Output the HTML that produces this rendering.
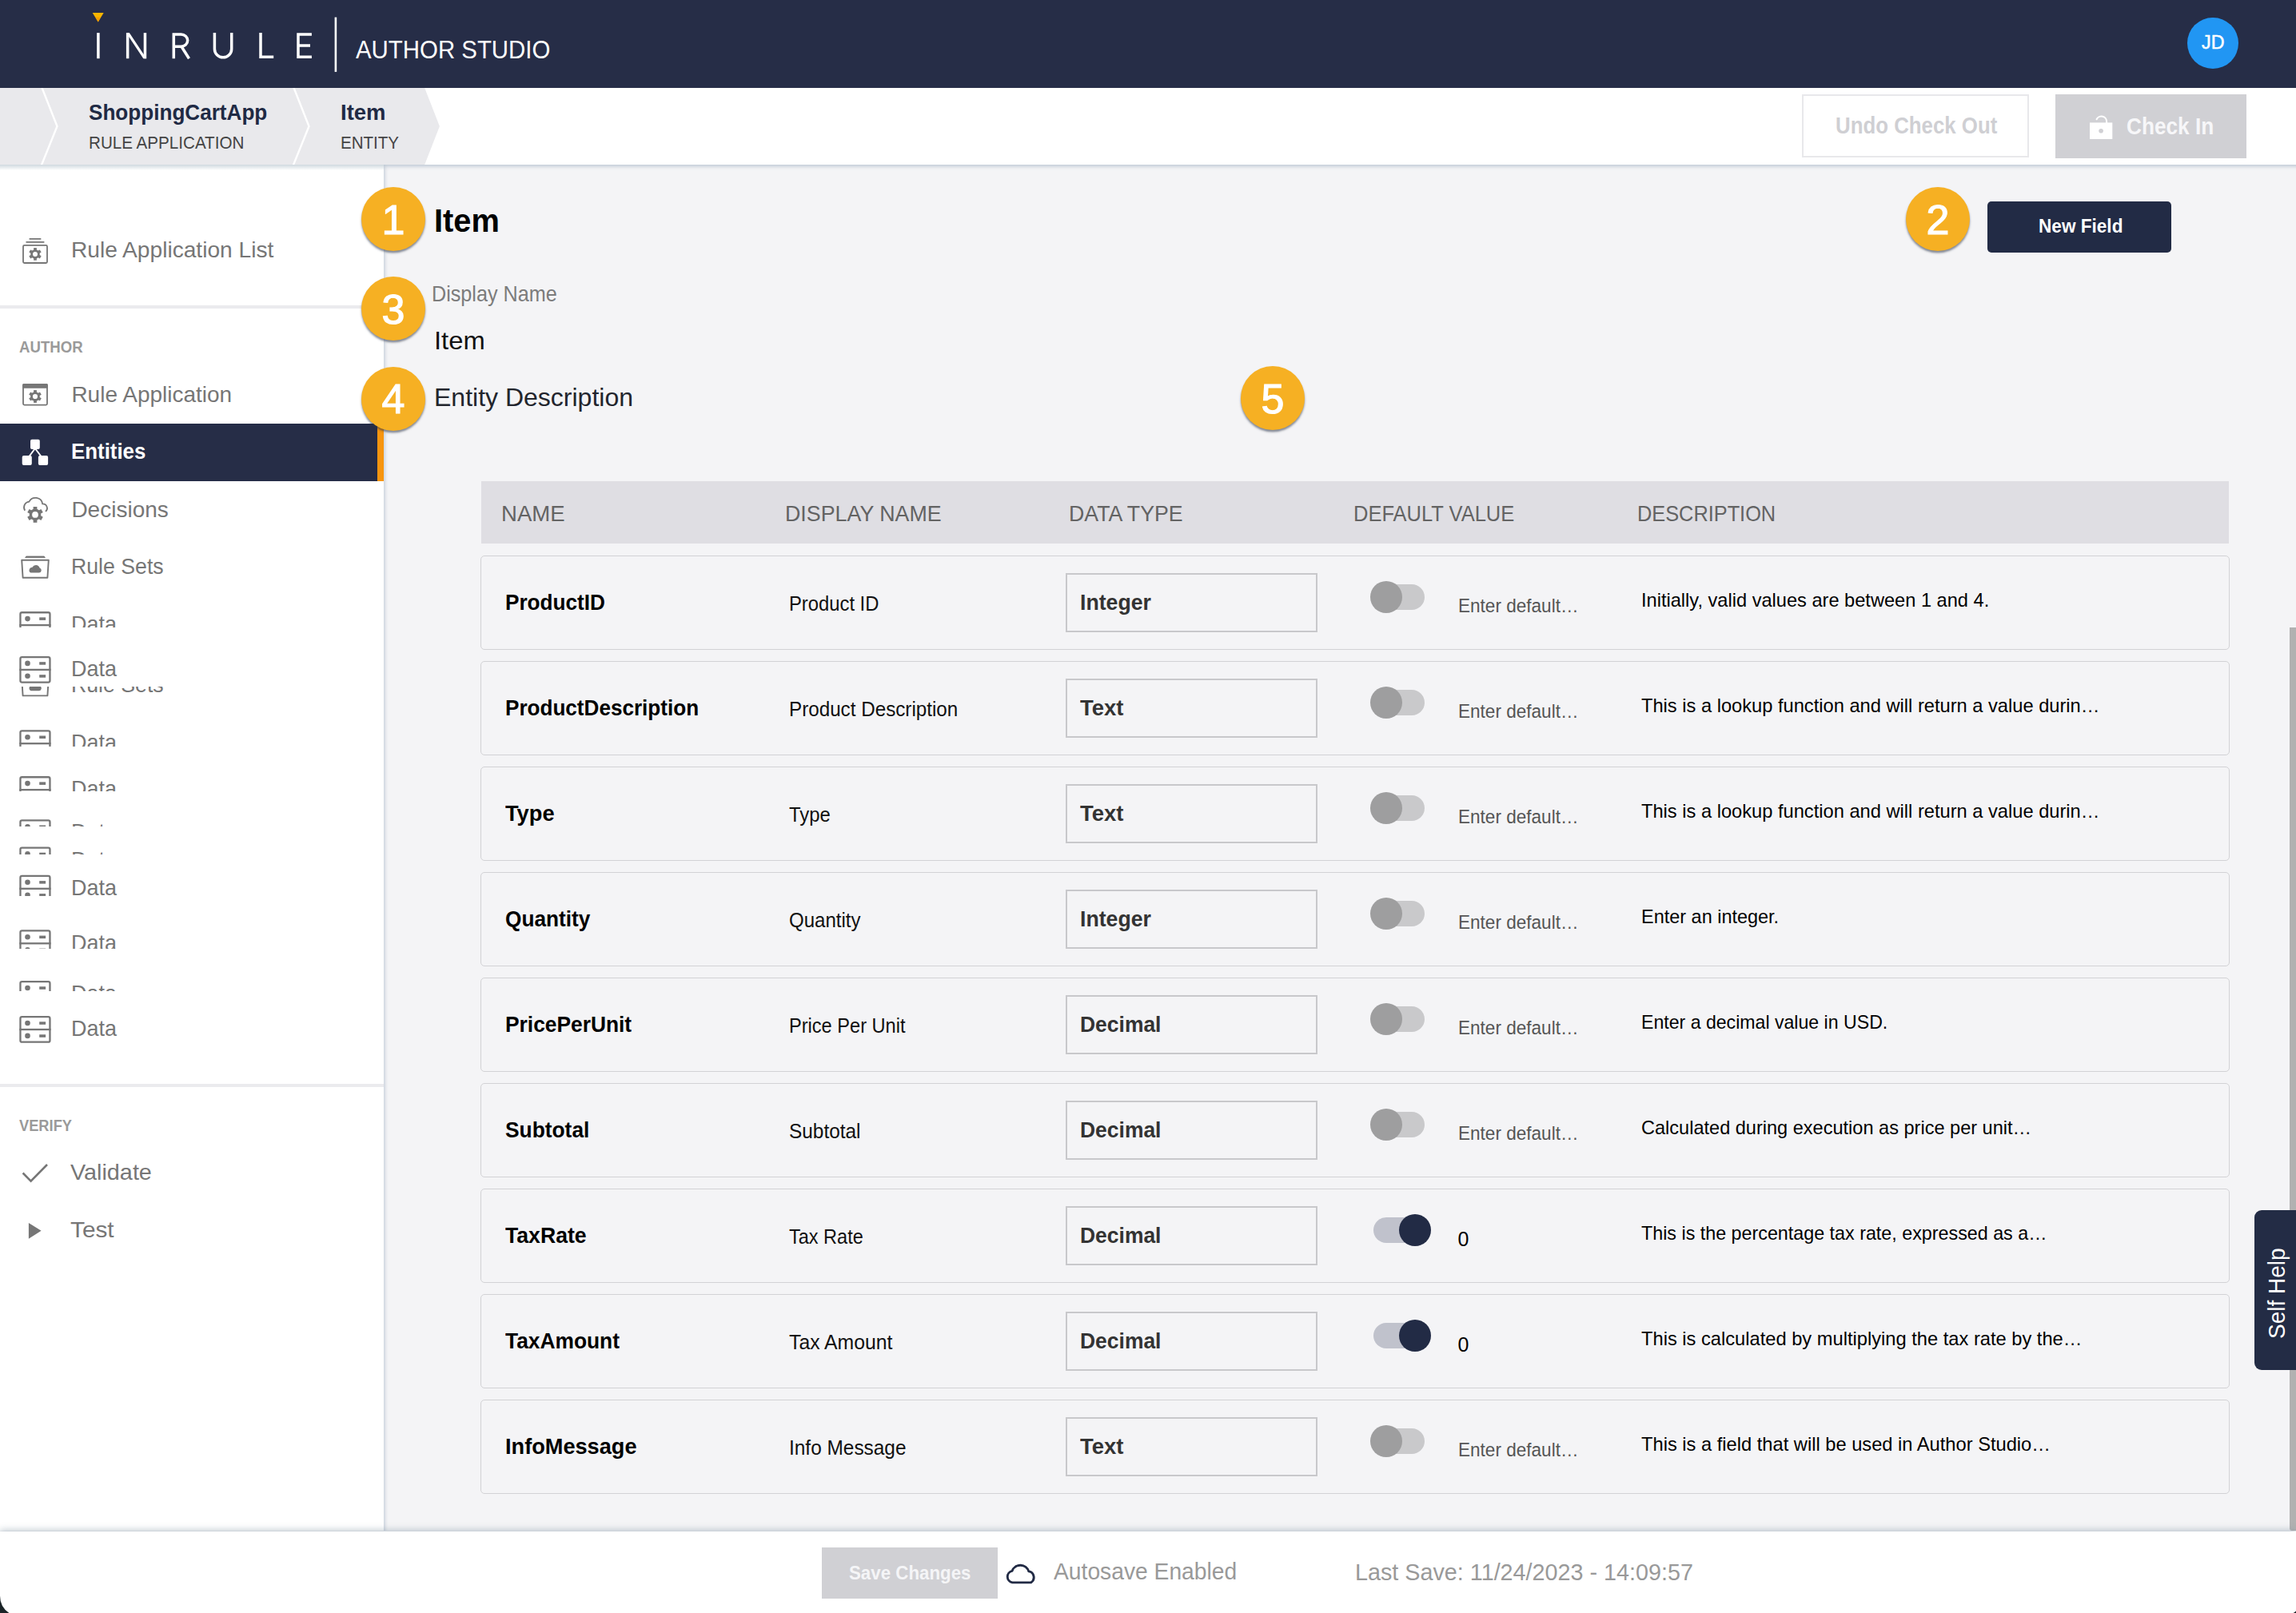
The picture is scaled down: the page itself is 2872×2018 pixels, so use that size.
<!DOCTYPE html>
<html><head><meta charset='utf-8'><title>InRule Author Studio</title><style>
html,body{margin:0;padding:0;}
body{width:2872px;height:2018px;overflow:hidden;position:relative;background:#f3f3f6;font-family:"Liberation Sans", sans-serif;}
.abs{position:absolute;}
.t{position:absolute;white-space:pre;line-height:1;}
.badge{width:80px;height:80px;border-radius:50%;background:#f6b023;box-shadow:0 2.5px 2.5px rgba(40,50,70,0.55);}
.row{width:2188.2px;height:118.3px;box-sizing:border-box;border:1.5px solid #d2d2d5;border-radius:5px;background:#f4f4f6;}
.tbox{width:315.2px;height:74.9px;box-sizing:border-box;border:2.2px solid #c8c8cb;background:#f4f4f6;}
.track{width:64px;height:32px;border-radius:16px;}
.knob{width:40.2px;height:40.2px;border-radius:50%;}
</style></head><body>
<div class='abs' style='left:0;top:0;width:2872px;height:110px;background:#262d47'></div>
<svg class='abs' style='left:0;top:0' width='700' height='110' viewBox='0 0 700 110'>
<polygon points='115.7,16 129.7,16 122.7,27.4' fill='#f7b500'/><polygon points='119.5,21.6 125.9,21.6 122.7,27.4' fill='#f39d00'/>
<g stroke='#fff' stroke-width='3.5' fill='none' stroke-linecap='butt' stroke-linejoin='miter'>
<path d='M122.9,41.1 V73.2'/>
</g><g fill='#fff'><rect x='157.9' y='41.1' width='3.5' height='32.1'/><rect x='179.7' y='41.1' width='3.5' height='32.1'/><polygon points='157.9,41.1 161.8,41.1 183.2,73.2 179.3,73.2'/></g><g stroke='#fff' stroke-width='3.5' fill='none'>
<path d='M217.3,73.2 V43 H226.5 A8.2,7.6 0 0 1 226.5,58.2 H217.3 M227,58.2 L236.5,73.2'/>
<path d='M268.4,41.1 V61.2 A10.65,10.65 0 0 0 289.7,61.2 V41.1'/>
<path d='M326,41.1 V71.3 H342.2'/>
<path d='M389.9,43 H373 V71.3 H389.9 M373,57 H388'/>
</g>
<rect x='418.6' y='21.6' width='2.6' height='68.3' fill='#fff'/>
</svg>
<div class='t' style='left:445.1px;top:46.56px;font-size:31px;font-weight:400;color:#fff;transform:scaleX(0.9483);transform-origin:0 0;'>AUTHOR STUDIO</div>
<div class='abs' style='left:2735.7px;top:22px;width:64px;height:64px;border-radius:50%;background:#2196f3'></div>
<div class='t' style='left:2754.0px;top:41.18px;font-size:24px;font-weight:400;color:#fff;transform:scaleX(0.9692);transform-origin:0 0;-webkit-text-stroke:0.5px #fff;'>JD</div>
<div class='abs' style='left:0;top:110px;width:2872px;height:96px;background:#fff'></div>
<svg class='abs' style='left:0;top:110px' width='600' height='96' viewBox='0 110 600 96'>
<polygon points='0,110 531.2,110 549.9,158 531.2,206 0,206' fill='#e9e9ec'/>
<polyline points='51.8,108 71.5,158 51.3,208' stroke='#fff' stroke-width='2.4' fill='none'/>
<polyline points='366.8,108 386.5,158 366.3,208' stroke='#fff' stroke-width='2.4' fill='none'/>
</svg>
<div class='t' style='left:110.6px;top:127.30px;font-size:28px;font-weight:700;color:#1f2a44;transform:scaleX(0.9322);transform-origin:0 0;'>ShoppingCartApp</div>
<div class='t' style='left:110.6px;top:168.05px;font-size:22.5px;font-weight:400;color:#444;transform:scaleX(0.9161);transform-origin:0 0;'>RULE APPLICATION</div>
<div class='t' style='left:425.9px;top:127.30px;font-size:28px;font-weight:700;color:#1f2a44;transform:scaleX(0.9809);transform-origin:0 0;'>Item</div>
<div class='t' style='left:425.9px;top:168.05px;font-size:22.5px;font-weight:400;color:#444;transform:scaleX(0.9129);transform-origin:0 0;'>ENTITY</div>
<div class='abs' style='left:2254.2px;top:118.2px;width:284.3px;height:79.2px;box-sizing:border-box;border:2.2px solid #e8e8eb;background:#fff'></div>
<div class='t' style='left:2296.4px;top:142.55px;font-size:29px;font-weight:700;color:#cfcfd3;transform:scaleX(0.8907);transform-origin:0 0;'>Undo Check Out</div>
<div class='abs' style='left:2571px;top:118.2px;width:238.8px;height:79.4px;background:#d0d0d4'></div>
<svg class='abs' style='left:2610px;top:140px' width='36' height='38' viewBox='0 0 36 38'>
<path d='M12.6,9.2 A6.6,6.6 0 0 1 25.1,12.6 V14' stroke='#fff' stroke-width='2.1' fill='none' stroke-linecap='round'/>
<rect x='4' y='13.4' width='28.3' height='20.6' fill='#fff'/>
<circle cx='18.1' cy='23.7' r='2.8' fill='#d0d0d4'/>
</svg>
<div class='t' style='left:2660.1px;top:143.75px;font-size:29px;font-weight:700;color:#f7f7f9;transform:scaleX(0.9037);transform-origin:0 0;'>Check In</div>
<div class='abs' style='left:0;top:206px;width:480px;height:1709px;background:#fff'></div>
<div class='abs' style='left:0;top:381.9px;width:480px;height:4px;background:#ebebee'></div>
<div class='abs' style='left:0;top:1356px;width:480px;height:4px;background:#ebebee'></div>
<svg class='abs' style='left:0;top:0' width='80' height='1600'>
<rect x='32.3' y='302.1' width='23.3' height='1.7' rx='0.8' fill='#767676'/>
<rect x='36.4' y='298.1' width='15.1' height='1.7' rx='0.8' fill='#767676'/>
<rect x='29' y='306.9' width='30' height='22.1' rx='1.5' fill='none' stroke='#767676' stroke-width='1.8'/>
<circle cx='44' cy='317.9' r='5.77' fill='#767676'/><rect x='42.13' y='310.10' width='3.74' height='3.90' fill='#767676' transform='rotate(0.0 44 317.9)'/><rect x='42.13' y='310.10' width='3.74' height='3.90' fill='#767676' transform='rotate(60.0 44 317.9)'/><rect x='42.13' y='310.10' width='3.74' height='3.90' fill='#767676' transform='rotate(120.0 44 317.9)'/><rect x='42.13' y='310.10' width='3.74' height='3.90' fill='#767676' transform='rotate(180.0 44 317.9)'/><rect x='42.13' y='310.10' width='3.74' height='3.90' fill='#767676' transform='rotate(240.0 44 317.9)'/><rect x='42.13' y='310.10' width='3.74' height='3.90' fill='#767676' transform='rotate(300.0 44 317.9)'/><circle cx='44' cy='317.9' r='3.0' fill='#fff'/>
<rect x='29' y='481' width='30' height='25.6' rx='1.5' fill='none' stroke='#767676' stroke-width='1.8'/>
<rect x='28.1' y='480.1' width='31.8' height='5.7' rx='1.5' fill='#767676'/>
<circle cx='44' cy='496' r='5.85' fill='#767676'/><rect x='42.10' y='488.10' width='3.79' height='3.95' fill='#767676' transform='rotate(0.0 44 496)'/><rect x='42.10' y='488.10' width='3.79' height='3.95' fill='#767676' transform='rotate(60.0 44 496)'/><rect x='42.10' y='488.10' width='3.79' height='3.95' fill='#767676' transform='rotate(120.0 44 496)'/><rect x='42.10' y='488.10' width='3.79' height='3.95' fill='#767676' transform='rotate(180.0 44 496)'/><rect x='42.10' y='488.10' width='3.79' height='3.95' fill='#767676' transform='rotate(240.0 44 496)'/><rect x='42.10' y='488.10' width='3.79' height='3.95' fill='#767676' transform='rotate(300.0 44 496)'/><circle cx='44' cy='496' r='3.1' fill='#fff'/>
<path d='M31.2,638.7 A7.2,7.2 0 0 1 36.4,627.6 A9,9 0 0 1 53.2,630.3 A5.4,5.4 0 0 1 56.9,639.9' fill='none' stroke='#767676' stroke-width='1.8'/>
<circle cx='44' cy='643.9' r='7.33' fill='#767676'/><rect x='41.62' y='634.00' width='4.75' height='4.95' fill='#767676' transform='rotate(0.0 44 643.9)'/><rect x='41.62' y='634.00' width='4.75' height='4.95' fill='#767676' transform='rotate(60.0 44 643.9)'/><rect x='41.62' y='634.00' width='4.75' height='4.95' fill='#767676' transform='rotate(120.0 44 643.9)'/><rect x='41.62' y='634.00' width='4.75' height='4.95' fill='#767676' transform='rotate(180.0 44 643.9)'/><rect x='41.62' y='634.00' width='4.75' height='4.95' fill='#767676' transform='rotate(240.0 44 643.9)'/><rect x='41.62' y='634.00' width='4.75' height='4.95' fill='#767676' transform='rotate(300.0 44 643.9)'/><circle cx='44' cy='643.9' r='3.9' fill='#fff'/>
<path d='M31.6,697.40 L32.9,696.10 H55.1 L56.4,697.40 Z' fill='#767676' stroke='#767676' stroke-width='1' stroke-linejoin='round'/><path d='M27.2,700.80 H60.8 L59.4,722.70 H28.6 Z' fill='none' stroke='#767676' stroke-width='1.9' stroke-linejoin='round'/><path d='M38.5,716.60 H49 A3.2,3.2 0 0 0 49.6,710.40 A5,5 0 0 0 40.4,709.80 A3.6,3.6 0 0 0 38.5,716.60 Z' fill='#767676'/>
</svg>
<div class='t' style='left:89.4px;top:298.90px;font-size:28px;font-weight:400;color:#767676;transform:scaleX(1.0045);transform-origin:0 0;'>Rule Application List</div>
<div class='t' style='left:24.3px;top:423.77px;font-size:20px;font-weight:700;color:#9a9a9a;transform:scaleX(0.9305);transform-origin:0 0;'>AUTHOR</div>
<div class='t' style='left:89.4px;top:479.50px;font-size:28px;font-weight:400;color:#767676;'>Rule Application</div>
<div class='abs' style='left:0;top:530px;width:480px;height:71.5px;background:#262d47'></div>
<div class='abs' style='left:471.8px;top:530px;width:8.2px;height:71.5px;background:#f7950f'></div>
<svg class='abs' style='left:0;top:540px' width='80' height='50' viewBox='0 540 80 50'>
<rect x='38' y='549.8' width='11.8' height='12.2' rx='2' fill='#fff'/>
<rect x='27.7' y='570' width='12.1' height='12' rx='2' fill='#fff'/>
<rect x='47.9' y='570' width='12.2' height='12' rx='2' fill='#fff'/>
<path d='M43.9,561 L36.5,571 M43.9,561 L51.5,571' stroke='#fff' stroke-width='2' fill='none'/>
</svg>
<div class='t' style='left:89.0px;top:551.30px;font-size:28px;font-weight:700;color:#fff;transform:scaleX(0.9233);transform-origin:0 0;'>Entities</div>
<div class='t' style='left:89.4px;top:623.60px;font-size:28px;font-weight:400;color:#767676;'>Decisions</div>
<div class='t' style='left:89.4px;top:695.00px;font-size:28px;font-weight:400;color:#767676;transform:scaleX(0.9528);transform-origin:0 0;'>Rule Sets</div>
<div class='abs' style='left:0;top:740.00px;width:480px;height:44.90px;overflow:hidden'><svg class='abs' style='left:0;top:-740.00px' width='80' height='2018'><rect x='25.45' y='766.25' width='37' height='31.5' rx='2' fill='none' stroke='#767676' stroke-width='2.3'/><rect x='24.3' y='780.95' width='39.3' height='2.3' fill='#767676'/><circle cx='34.5' cy='774.10' r='3.3' fill='#767676'/><rect x='49.2' y='772.40' width='7.9' height='3.5' fill='#767676'/><circle cx='34.5' cy='790.00' r='3.3' fill='#767676'/><rect x='49.2' y='788.40' width='7.9' height='3.5' fill='#767676'/></svg><div class='t' style='left:89.4px;top:27.30px;font-size:28px;font-weight:400;color:#767676;transform:scaleX(0.9615);transform-origin:0 0;'>Data</div></div>
<div class='abs' style='left:0;top:801.80px;width:480px;height:65.00px;overflow:hidden'><svg class='abs' style='left:0;top:-801.80px' width='80' height='2018'><rect x='25.45' y='822.05' width='37' height='31.5' rx='2' fill='none' stroke='#767676' stroke-width='2.3'/><rect x='24.3' y='836.75' width='39.3' height='2.3' fill='#767676'/><circle cx='34.5' cy='829.90' r='3.3' fill='#767676'/><rect x='49.2' y='828.20' width='7.9' height='3.5' fill='#767676'/><circle cx='34.5' cy='845.80' r='3.3' fill='#767676'/><rect x='49.2' y='844.20' width='7.9' height='3.5' fill='#767676'/></svg><div class='t' style='left:89.4px;top:21.30px;font-size:28px;font-weight:400;color:#767676;transform:scaleX(0.9615);transform-origin:0 0;'>Data</div></div>
<div class='abs' style='left:0;top:859.00px;width:480px;height:21.00px;overflow:hidden'><svg class='abs' style='left:0;top:-859.00px' width='80' height='2018'><path d='M31.6,845.10 L32.9,843.80 H55.1 L56.4,845.10 Z' fill='#767676' stroke='#767676' stroke-width='1' stroke-linejoin='round'/><path d='M27.2,848.50 H60.8 L59.4,870.40 H28.6 Z' fill='none' stroke='#767676' stroke-width='1.9' stroke-linejoin='round'/><path d='M38.5,864.30 H49 A3.2,3.2 0 0 0 49.6,858.10 A5,5 0 0 0 40.4,857.50 A3.6,3.6 0 0 0 38.5,864.30 Z' fill='#767676'/></svg><div class='t' style='left:89.4px;top:-16.30px;font-size:28px;font-weight:400;color:#767676;transform:scaleX(0.9528);transform-origin:0 0;'>Rule Sets</div></div>
<div class='abs' style='left:0;top:900.00px;width:480px;height:33.70px;overflow:hidden'><svg class='abs' style='left:0;top:-900.00px' width='80' height='2018'><rect x='25.45' y='914.35' width='37' height='31.5' rx='2' fill='none' stroke='#767676' stroke-width='2.3'/><rect x='24.3' y='929.05' width='39.3' height='2.3' fill='#767676'/><circle cx='34.5' cy='922.20' r='3.3' fill='#767676'/><rect x='49.2' y='920.50' width='7.9' height='3.5' fill='#767676'/><circle cx='34.5' cy='938.10' r='3.3' fill='#767676'/><rect x='49.2' y='936.50' width='7.9' height='3.5' fill='#767676'/></svg><div class='t' style='left:89.4px;top:15.40px;font-size:28px;font-weight:400;color:#767676;transform:scaleX(0.9615);transform-origin:0 0;'>Data</div></div>
<div class='abs' style='left:0;top:950.00px;width:480px;height:39.80px;overflow:hidden'><svg class='abs' style='left:0;top:-950.00px' width='80' height='2018'><rect x='25.45' y='972.25' width='37' height='31.5' rx='2' fill='none' stroke='#767676' stroke-width='2.3'/><rect x='24.3' y='986.95' width='39.3' height='2.3' fill='#767676'/><circle cx='34.5' cy='980.10' r='3.3' fill='#767676'/><rect x='49.2' y='978.40' width='7.9' height='3.5' fill='#767676'/><circle cx='34.5' cy='996.00' r='3.3' fill='#767676'/><rect x='49.2' y='994.40' width='7.9' height='3.5' fill='#767676'/></svg><div class='t' style='left:89.4px;top:23.30px;font-size:28px;font-weight:400;color:#767676;transform:scaleX(0.9615);transform-origin:0 0;'>Data</div></div>
<div class='abs' style='left:0;top:1010.00px;width:480px;height:23.90px;overflow:hidden'><svg class='abs' style='left:0;top:-1010.00px' width='80' height='2018'><rect x='25.45' y='1026.35' width='37' height='31.5' rx='2' fill='none' stroke='#767676' stroke-width='2.3'/><rect x='24.3' y='1041.05' width='39.3' height='2.3' fill='#767676'/><circle cx='34.5' cy='1034.20' r='3.3' fill='#767676'/><rect x='49.2' y='1032.50' width='7.9' height='3.5' fill='#767676'/><circle cx='34.5' cy='1050.10' r='3.3' fill='#767676'/><rect x='49.2' y='1048.50' width='7.9' height='3.5' fill='#767676'/></svg><div class='t' style='left:89.4px;top:17.40px;font-size:28px;font-weight:400;color:#767676;transform:scaleX(0.9615);transform-origin:0 0;'>Data</div></div>
<div class='abs' style='left:0;top:1040.00px;width:480px;height:29.10px;overflow:hidden'><svg class='abs' style='left:0;top:-1040.00px' width='80' height='2018'><rect x='25.45' y='1060.55' width='37' height='31.5' rx='2' fill='none' stroke='#767676' stroke-width='2.3'/><rect x='24.3' y='1075.25' width='39.3' height='2.3' fill='#767676'/><circle cx='34.5' cy='1068.40' r='3.3' fill='#767676'/><rect x='49.2' y='1066.70' width='7.9' height='3.5' fill='#767676'/><circle cx='34.5' cy='1084.30' r='3.3' fill='#767676'/><rect x='49.2' y='1082.70' width='7.9' height='3.5' fill='#767676'/></svg><div class='t' style='left:89.4px;top:21.60px;font-size:28px;font-weight:400;color:#767676;transform:scaleX(0.9615);transform-origin:0 0;'>Data</div></div>
<div class='abs' style='left:0;top:1080.00px;width:480px;height:41.10px;overflow:hidden'><svg class='abs' style='left:0;top:-1080.00px' width='80' height='2018'><rect x='25.45' y='1095.95' width='37' height='31.5' rx='2' fill='none' stroke='#767676' stroke-width='2.3'/><rect x='24.3' y='1110.65' width='39.3' height='2.3' fill='#767676'/><circle cx='34.5' cy='1103.80' r='3.3' fill='#767676'/><rect x='49.2' y='1102.10' width='7.9' height='3.5' fill='#767676'/><circle cx='34.5' cy='1119.70' r='3.3' fill='#767676'/><rect x='49.2' y='1118.10' width='7.9' height='3.5' fill='#767676'/></svg><div class='t' style='left:89.4px;top:17.00px;font-size:28px;font-weight:400;color:#767676;transform:scaleX(0.9615);transform-origin:0 0;'>Data</div></div>
<div class='abs' style='left:0;top:1140.00px;width:480px;height:46.50px;overflow:hidden'><svg class='abs' style='left:0;top:-1140.00px' width='80' height='2018'><rect x='25.45' y='1164.45' width='37' height='31.5' rx='2' fill='none' stroke='#767676' stroke-width='2.3'/><rect x='24.3' y='1179.15' width='39.3' height='2.3' fill='#767676'/><circle cx='34.5' cy='1172.30' r='3.3' fill='#767676'/><rect x='49.2' y='1170.60' width='7.9' height='3.5' fill='#767676'/><circle cx='34.5' cy='1188.20' r='3.3' fill='#767676'/><rect x='49.2' y='1186.60' width='7.9' height='3.5' fill='#767676'/></svg><div class='t' style='left:89.4px;top:25.50px;font-size:28px;font-weight:400;color:#767676;transform:scaleX(0.9615);transform-origin:0 0;'>Data</div></div>
<div class='abs' style='left:0;top:1200.00px;width:480px;height:40.40px;overflow:hidden'><svg class='abs' style='left:0;top:-1200.00px' width='80' height='2018'><rect x='25.45' y='1228.15' width='37' height='31.5' rx='2' fill='none' stroke='#767676' stroke-width='2.3'/><rect x='24.3' y='1242.85' width='39.3' height='2.3' fill='#767676'/><circle cx='34.5' cy='1236.00' r='3.3' fill='#767676'/><rect x='49.2' y='1234.30' width='7.9' height='3.5' fill='#767676'/><circle cx='34.5' cy='1251.90' r='3.3' fill='#767676'/><rect x='49.2' y='1250.30' width='7.9' height='3.5' fill='#767676'/></svg><div class='t' style='left:89.4px;top:29.20px;font-size:28px;font-weight:400;color:#767676;transform:scaleX(0.9615);transform-origin:0 0;'>Data</div></div>
<div class='abs' style='left:0;top:1255.00px;width:480px;height:65.00px;overflow:hidden'><svg class='abs' style='left:0;top:-1255.00px' width='80' height='2018'><rect x='25.45' y='1272.15' width='37' height='31.5' rx='2' fill='none' stroke='#767676' stroke-width='2.3'/><rect x='24.3' y='1286.85' width='39.3' height='2.3' fill='#767676'/><circle cx='34.5' cy='1280.00' r='3.3' fill='#767676'/><rect x='49.2' y='1278.30' width='7.9' height='3.5' fill='#767676'/><circle cx='34.5' cy='1295.90' r='3.3' fill='#767676'/><rect x='49.2' y='1294.30' width='7.9' height='3.5' fill='#767676'/></svg><div class='t' style='left:89.4px;top:18.20px;font-size:28px;font-weight:400;color:#767676;transform:scaleX(0.9615);transform-origin:0 0;'>Data</div></div>
<div class='t' style='left:24.3px;top:1397.77px;font-size:20px;font-weight:700;color:#9a9a9a;transform:scaleX(0.9135);transform-origin:0 0;'>VERIFY</div>
<svg class='abs' style='left:0;top:1440px' width='80' height='120' viewBox='0 1440 80 120'>
<path d='M28.6,1467.5 L38.6,1477.6 L59,1457' stroke='#767676' stroke-width='2.6' fill='none'/>
<polygon points='35.9,1530 51.6,1539.8 35.9,1549.7' fill='#767676'/>
</svg>
<div class='t' style='left:88.2px;top:1452.70px;font-size:28px;font-weight:400;color:#767676;transform:scaleX(1.0280);transform-origin:0 0;'>Validate</div>
<div class='t' style='left:88.2px;top:1525.00px;font-size:28px;font-weight:400;color:#767676;transform:scaleX(1.0627);transform-origin:0 0;'>Test</div>
<div class='abs' style='left:480px;top:206px;width:2392px;height:1709px;background:#f4f4f6;box-shadow:inset 4px 5px 5px -3px rgba(140,160,180,0.55)'></div>
<div class='abs' style='left:0;top:206px;width:480px;height:7px;background:linear-gradient(rgba(150,170,185,0.45),rgba(150,170,185,0))'></div>
<div class='abs badge' style='left:451.9px;top:234px'></div>
<div class='t' style='left:451.9px;top:248.98px;font-size:52px;font-weight:400;color:#fff;width:80px;text-align:center;-webkit-text-stroke:1.2px #fff;'>1</div>
<div class='abs badge' style='left:2384px;top:234px'></div>
<div class='t' style='left:2384.0px;top:248.98px;font-size:52px;font-weight:400;color:#fff;width:80px;text-align:center;-webkit-text-stroke:1.2px #fff;'>2</div>
<div class='abs badge' style='left:451.9px;top:346.3px'></div>
<div class='t' style='left:451.9px;top:361.28px;font-size:52px;font-weight:400;color:#fff;width:80px;text-align:center;-webkit-text-stroke:1.2px #fff;'>3</div>
<div class='abs badge' style='left:451.9px;top:458.5px'></div>
<div class='t' style='left:451.9px;top:473.48px;font-size:52px;font-weight:400;color:#fff;width:80px;text-align:center;-webkit-text-stroke:1.2px #fff;'>4</div>
<div class='abs badge' style='left:1552px;top:458px'></div>
<div class='t' style='left:1552.0px;top:472.98px;font-size:52px;font-weight:400;color:#fff;width:80px;text-align:center;-webkit-text-stroke:1.2px #fff;'>5</div>
<div class='t' style='left:543.0px;top:256.29px;font-size:41px;font-weight:700;color:#000;transform:scaleX(0.9709);transform-origin:0 0;'>Item</div>
<div class='t' style='left:540.4px;top:354.30px;font-size:28px;font-weight:400;color:#7c7c7c;transform:scaleX(0.8990);transform-origin:0 0;'>Display Name</div>
<div class='t' style='left:543.0px;top:410.11px;font-size:32px;font-weight:400;color:#111;transform:scaleX(1.0239);transform-origin:0 0;'>Item</div>
<div class='t' style='left:543.0px;top:481.31px;font-size:32px;font-weight:400;color:#22252d;'>Entity Description</div>
<div class='abs' style='left:2486.2px;top:251.9px;width:229.7px;height:63.9px;border-radius:5px;background:#222b45'></div>
<div class='t' style='left:2549.5px;top:271.48px;font-size:24px;font-weight:700;color:#fff;transform:scaleX(0.9412);transform-origin:0 0;'>New Field</div>
<div class='abs' style='left:602px;top:602px;width:2186px;height:78px;background:#dfdee3'></div>
<div class='t' style='left:626.9px;top:628.80px;font-size:28px;font-weight:400;color:#636363;transform:scaleX(0.9836);transform-origin:0 0;'>NAME</div>
<div class='t' style='left:982.2px;top:628.80px;font-size:28px;font-weight:400;color:#636363;transform:scaleX(0.9575);transform-origin:0 0;'>DISPLAY NAME</div>
<div class='t' style='left:1337.3px;top:628.80px;font-size:28px;font-weight:400;color:#636363;transform:scaleX(0.9551);transform-origin:0 0;'>DATA TYPE</div>
<div class='t' style='left:1692.7px;top:628.80px;font-size:28px;font-weight:400;color:#636363;transform:scaleX(0.9109);transform-origin:0 0;'>DEFAULT VALUE</div>
<div class='t' style='left:2048.2px;top:628.80px;font-size:28px;font-weight:400;color:#636363;transform:scaleX(0.9050);transform-origin:0 0;'>DESCRIPTION</div>
<div class='abs row' style='left:600.85px;top:694.65px'></div>
<div class='t' style='left:631.9px;top:740.35px;font-size:28px;font-weight:700;color:#000;transform:scaleX(0.9335);transform-origin:0 0;'>ProductID</div>
<div class='t' style='left:987.2px;top:742.99px;font-size:25px;font-weight:400;color:#111;transform:scaleX(0.9517);transform-origin:0 0;'>Product ID</div>
<div class='abs tbox' style='left:1332.5px;top:716.50px'></div>
<div class='t' style='left:1351.2px;top:739.85px;font-size:28px;font-weight:700;color:#333;transform:scaleX(0.9520);transform-origin:0 0;'>Integer</div>
<div class='abs track' style='left:1718px;top:730.90px;background:#c9c9cb'></div>
<div class='abs knob' style='left:1714px;top:726.80px;background:#9e9e9f'></div>
<div class='t' style='left:1824.0px;top:746.16px;font-size:24.5px;font-weight:400;color:#555;transform:scaleX(0.9207);transform-origin:0 0;'>Enter default…</div>
<div class='t' style='left:2053.1px;top:738.88px;font-size:24px;font-weight:400;color:#000;transform:scaleX(0.9836);transform-origin:0 0;'>Initially, valid values are between 1 and 4.</div>
<div class='abs row' style='left:600.85px;top:826.65px'></div>
<div class='t' style='left:631.9px;top:872.35px;font-size:28px;font-weight:700;color:#000;transform:scaleX(0.9317);transform-origin:0 0;'>ProductDescription</div>
<div class='t' style='left:987.2px;top:874.99px;font-size:25px;font-weight:400;color:#111;transform:scaleX(0.9686);transform-origin:0 0;'>Product Description</div>
<div class='abs tbox' style='left:1332.5px;top:848.50px'></div>
<div class='t' style='left:1351.2px;top:871.85px;font-size:28px;font-weight:700;color:#333;transform:scaleX(0.9816);transform-origin:0 0;'>Text</div>
<div class='abs track' style='left:1718px;top:862.90px;background:#c9c9cb'></div>
<div class='abs knob' style='left:1714px;top:858.80px;background:#9e9e9f'></div>
<div class='t' style='left:1824.0px;top:878.16px;font-size:24.5px;font-weight:400;color:#555;transform:scaleX(0.9207);transform-origin:0 0;'>Enter default…</div>
<div class='t' style='left:2053.1px;top:870.88px;font-size:24px;font-weight:400;color:#000;transform:scaleX(0.9859);transform-origin:0 0;'>This is a lookup function and will return a value durin…</div>
<div class='abs row' style='left:600.85px;top:958.65px'></div>
<div class='t' style='left:631.9px;top:1004.35px;font-size:28px;font-weight:700;color:#000;transform:scaleX(0.9731);transform-origin:0 0;'>Type</div>
<div class='t' style='left:987.2px;top:1006.99px;font-size:25px;font-weight:400;color:#111;transform:scaleX(0.9538);transform-origin:0 0;'>Type</div>
<div class='abs tbox' style='left:1332.5px;top:980.50px'></div>
<div class='t' style='left:1351.2px;top:1003.85px;font-size:28px;font-weight:700;color:#333;transform:scaleX(0.9816);transform-origin:0 0;'>Text</div>
<div class='abs track' style='left:1718px;top:994.90px;background:#c9c9cb'></div>
<div class='abs knob' style='left:1714px;top:990.80px;background:#9e9e9f'></div>
<div class='t' style='left:1824.0px;top:1010.16px;font-size:24.5px;font-weight:400;color:#555;transform:scaleX(0.9207);transform-origin:0 0;'>Enter default…</div>
<div class='t' style='left:2053.1px;top:1002.88px;font-size:24px;font-weight:400;color:#000;transform:scaleX(0.9859);transform-origin:0 0;'>This is a lookup function and will return a value durin…</div>
<div class='abs row' style='left:600.85px;top:1090.65px'></div>
<div class='t' style='left:631.9px;top:1136.35px;font-size:28px;font-weight:700;color:#000;transform:scaleX(0.9359);transform-origin:0 0;'>Quantity</div>
<div class='t' style='left:987.2px;top:1138.99px;font-size:25px;font-weight:400;color:#111;transform:scaleX(0.9612);transform-origin:0 0;'>Quantity</div>
<div class='abs tbox' style='left:1332.5px;top:1112.50px'></div>
<div class='t' style='left:1351.2px;top:1135.85px;font-size:28px;font-weight:700;color:#333;transform:scaleX(0.9520);transform-origin:0 0;'>Integer</div>
<div class='abs track' style='left:1718px;top:1126.90px;background:#c9c9cb'></div>
<div class='abs knob' style='left:1714px;top:1122.80px;background:#9e9e9f'></div>
<div class='t' style='left:1824.0px;top:1142.16px;font-size:24.5px;font-weight:400;color:#555;transform:scaleX(0.9207);transform-origin:0 0;'>Enter default…</div>
<div class='t' style='left:2053.1px;top:1134.88px;font-size:24px;font-weight:400;color:#000;transform:scaleX(0.9774);transform-origin:0 0;'>Enter an integer.</div>
<div class='abs row' style='left:600.85px;top:1222.65px'></div>
<div class='t' style='left:631.9px;top:1268.35px;font-size:28px;font-weight:700;color:#000;transform:scaleX(0.9405);transform-origin:0 0;'>PricePerUnit</div>
<div class='t' style='left:987.2px;top:1270.99px;font-size:25px;font-weight:400;color:#111;transform:scaleX(0.9435);transform-origin:0 0;'>Price Per Unit</div>
<div class='abs tbox' style='left:1332.5px;top:1244.50px'></div>
<div class='t' style='left:1351.2px;top:1267.85px;font-size:28px;font-weight:700;color:#333;transform:scaleX(0.9448);transform-origin:0 0;'>Decimal</div>
<div class='abs track' style='left:1718px;top:1258.90px;background:#c9c9cb'></div>
<div class='abs knob' style='left:1714px;top:1254.80px;background:#9e9e9f'></div>
<div class='t' style='left:1824.0px;top:1274.16px;font-size:24.5px;font-weight:400;color:#555;transform:scaleX(0.9207);transform-origin:0 0;'>Enter default…</div>
<div class='t' style='left:2053.1px;top:1266.88px;font-size:24px;font-weight:400;color:#000;transform:scaleX(0.9628);transform-origin:0 0;'>Enter a decimal value in USD.</div>
<div class='abs row' style='left:600.85px;top:1354.65px'></div>
<div class='t' style='left:631.9px;top:1400.35px;font-size:28px;font-weight:700;color:#000;transform:scaleX(0.9409);transform-origin:0 0;'>Subtotal</div>
<div class='t' style='left:987.2px;top:1402.99px;font-size:25px;font-weight:400;color:#111;transform:scaleX(0.9755);transform-origin:0 0;'>Subtotal</div>
<div class='abs tbox' style='left:1332.5px;top:1376.50px'></div>
<div class='t' style='left:1351.2px;top:1399.85px;font-size:28px;font-weight:700;color:#333;transform:scaleX(0.9448);transform-origin:0 0;'>Decimal</div>
<div class='abs track' style='left:1718px;top:1390.90px;background:#c9c9cb'></div>
<div class='abs knob' style='left:1714px;top:1386.80px;background:#9e9e9f'></div>
<div class='t' style='left:1824.0px;top:1406.16px;font-size:24.5px;font-weight:400;color:#555;transform:scaleX(0.9207);transform-origin:0 0;'>Enter default…</div>
<div class='t' style='left:2053.1px;top:1398.88px;font-size:24px;font-weight:400;color:#000;transform:scaleX(0.9809);transform-origin:0 0;'>Calculated during execution as price per unit…</div>
<div class='abs row' style='left:600.85px;top:1486.65px'></div>
<div class='t' style='left:631.9px;top:1532.35px;font-size:28px;font-weight:700;color:#000;transform:scaleX(0.9515);transform-origin:0 0;'>TaxRate</div>
<div class='t' style='left:987.2px;top:1534.99px;font-size:25px;font-weight:400;color:#111;transform:scaleX(0.9405);transform-origin:0 0;'>Tax Rate</div>
<div class='abs tbox' style='left:1332.5px;top:1508.50px'></div>
<div class='t' style='left:1351.2px;top:1531.85px;font-size:28px;font-weight:700;color:#333;transform:scaleX(0.9448);transform-origin:0 0;'>Decimal</div>
<div class='abs track' style='left:1718px;top:1522.90px;background:#c0c2cc'></div>
<div class='abs knob' style='left:1749.8px;top:1518.80px;background:#222b45'></div>
<div class='t' style='left:1823.6px;top:1538.14px;font-size:25px;font-weight:400;color:#000;'>0</div>
<div class='t' style='left:2053.1px;top:1530.88px;font-size:24px;font-weight:400;color:#000;transform:scaleX(0.9704);transform-origin:0 0;'>This is the percentage tax rate, expressed as a…</div>
<div class='abs row' style='left:600.85px;top:1618.65px'></div>
<div class='t' style='left:631.9px;top:1664.35px;font-size:28px;font-weight:700;color:#000;transform:scaleX(0.9411);transform-origin:0 0;'>TaxAmount</div>
<div class='t' style='left:987.2px;top:1666.99px;font-size:25px;font-weight:400;color:#111;transform:scaleX(0.9913);transform-origin:0 0;'>Tax Amount</div>
<div class='abs tbox' style='left:1332.5px;top:1640.50px'></div>
<div class='t' style='left:1351.2px;top:1663.85px;font-size:28px;font-weight:700;color:#333;transform:scaleX(0.9448);transform-origin:0 0;'>Decimal</div>
<div class='abs track' style='left:1718px;top:1654.90px;background:#c0c2cc'></div>
<div class='abs knob' style='left:1749.8px;top:1650.80px;background:#222b45'></div>
<div class='t' style='left:1823.6px;top:1670.14px;font-size:25px;font-weight:400;color:#000;'>0</div>
<div class='t' style='left:2053.1px;top:1662.88px;font-size:24px;font-weight:400;color:#000;transform:scaleX(0.9866);transform-origin:0 0;'>This is calculated by multiplying the tax rate by the…</div>
<div class='abs row' style='left:600.85px;top:1750.65px'></div>
<div class='t' style='left:631.9px;top:1796.35px;font-size:28px;font-weight:700;color:#000;transform:scaleX(0.9698);transform-origin:0 0;'>InfoMessage</div>
<div class='t' style='left:987.2px;top:1798.99px;font-size:25px;font-weight:400;color:#111;transform:scaleX(0.9761);transform-origin:0 0;'>Info Message</div>
<div class='abs tbox' style='left:1332.5px;top:1772.50px'></div>
<div class='t' style='left:1351.2px;top:1795.85px;font-size:28px;font-weight:700;color:#333;transform:scaleX(0.9816);transform-origin:0 0;'>Text</div>
<div class='abs track' style='left:1718px;top:1786.90px;background:#c9c9cb'></div>
<div class='abs knob' style='left:1714px;top:1782.80px;background:#9e9e9f'></div>
<div class='t' style='left:1824.0px;top:1802.16px;font-size:24.5px;font-weight:400;color:#555;transform:scaleX(0.9207);transform-origin:0 0;'>Enter default…</div>
<div class='t' style='left:2053.1px;top:1794.88px;font-size:24px;font-weight:400;color:#000;transform:scaleX(0.9865);transform-origin:0 0;'>This is a field that will be used in Author Studio…</div>
<div class='abs' style='left:2864.2px;top:784.6px;width:7.8px;height:1130.4px;background:#b1b1b1;border-radius:0 0 0 3px'></div>
<div class='abs' style='left:2820px;top:1513.8px;width:60px;height:200.1px;border-radius:9px;background:#232c45'></div>
<div class='abs' style='left:2820px;top:1513.8px;width:52px;height:200.1px;'><div class='t' style='left:14.15px;top:160.80px;font-size:29px;color:#fff;transform-origin:0 0;transform:rotate(-90deg) scaleX(0.965);'>Self Help</div></div>
<div class='abs' style='left:0;top:1915.5px;width:2872px;height:103px;background:#fff;box-shadow:0 -2px 8px rgba(120,140,155,0.45)'></div>
<div class='abs' style='left:1028.2px;top:1936px;width:219.5px;height:63.8px;background:#d0d0d4'></div>
<div class='t' style='left:1062.3px;top:1955.68px;font-size:24px;font-weight:700;color:#f5f5f7;transform:scaleX(0.9291);transform-origin:0 0;'>Save Changes</div>
<svg class='abs' style='left:1250px;top:1945px' width='56' height='45' viewBox='1250 1945 56 45'>
<path d='M1266.3,1979.9 A7.4,7.4 0 0 1 1266.0,1965.4 A11.0,11.0 0 0 1 1286.8,1965.9 A7.6,7.6 0 0 1 1289.5,1979.9 Z' fill='none' stroke='#222b45' stroke-width='2.9' stroke-linejoin='round'/>
</svg>
<div class='t' style='left:1318.2px;top:1951.31px;font-size:30px;font-weight:400;color:#999;transform:scaleX(0.9412);transform-origin:0 0;'>Autosave Enabled</div>
<div class='t' style='left:1695.0px;top:1952.55px;font-size:29px;font-weight:400;color:#999;transform:scaleX(0.9911);transform-origin:0 0;'>Last Save: 11/24/2023 - 14:09:57</div>
<svg class='abs' style='left:0;top:1990px' width='40' height='28' viewBox='0 1990 40 28'><path d='M0,1996.4 A26.2,26.2 0 0 0 11.37,2018 L0,2018 Z' fill='#1b2428'/></svg>
<svg class='abs' style='left:2862px;top:2010px' width='10' height='8' viewBox='2862 2010 10 8'><path d='M2872,2015.4 Q2870.2,2017.2 2868.6,2018 L2872,2018 Z' fill='#1b2428'/></svg>
</body></html>
